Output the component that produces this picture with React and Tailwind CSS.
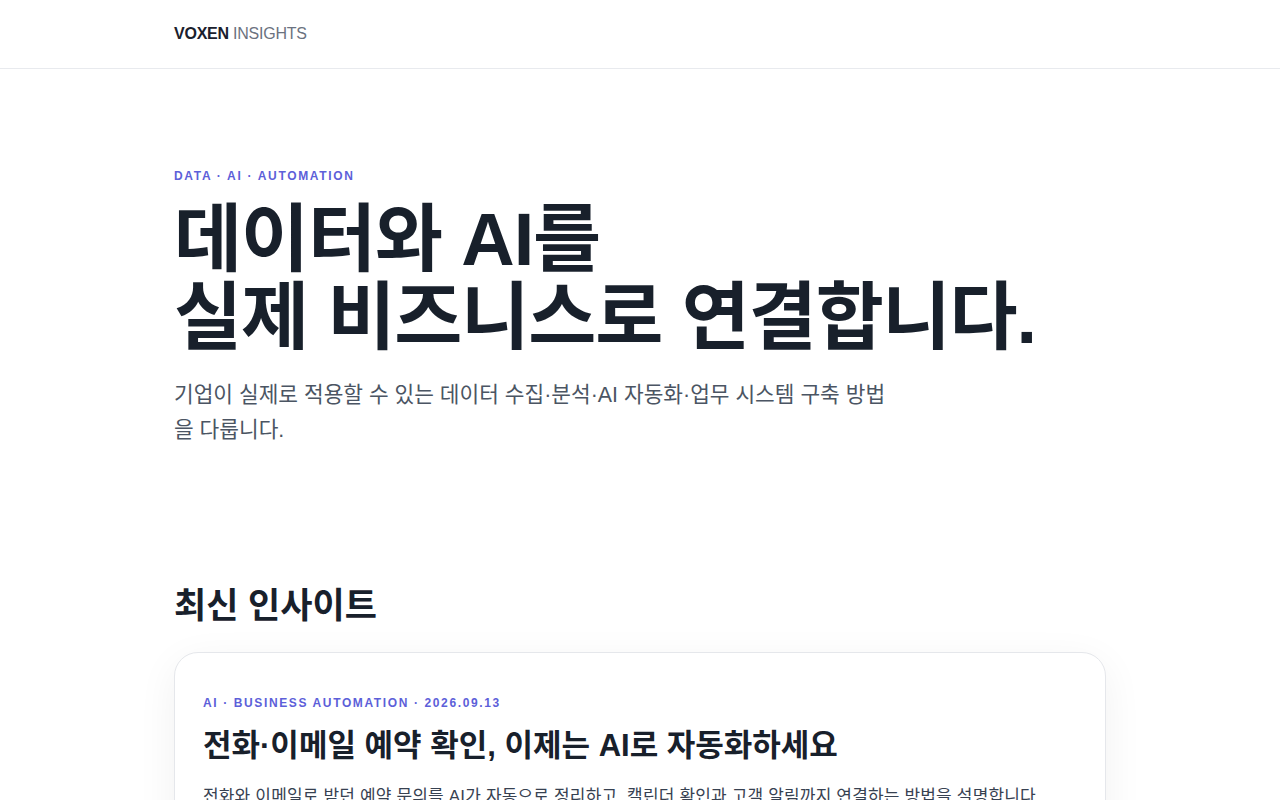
import React from 'react';

const FONT = { fontFamily: '"Liberation Sans", "Noto Sans CJK KR", sans-serif' };

const posts = [
  {
    meta: 'AI · BUSINESS AUTOMATION · 2026.09.13',
    title: '전화·이메일 예약 확인, 이제는 AI로 자동화하세요',
    excerpt:
      '전화와 이메일로 받던 예약 문의를 AI가 자동으로 정리하고, 캘린더 확인과 고객 알림까지 연결하는 방법을 설명합니다.',
  },
];

const App = () => {
  return (
    <div className="min-h-screen bg-white text-[#1a202c]" style={FONT}>
      <header className="h-[69px] border-b border-[#e8eaee]">
        <div className="mx-auto flex h-full max-w-[980px] items-center px-6">
          <a href="#" className="text-[16px] tracking-[-0.015em]">
            <span className="font-bold text-[#1a202c]">VOXEN</span>{' '}
            <span className="text-[#6b7280]">INSIGHTS</span>
          </a>
        </div>
      </header>

      <main className="mx-auto max-w-[980px] px-6">
        {/* hero */}
        <section className="pt-[99px] pb-[134px]">
          <p className="text-[12px] leading-4 font-bold tracking-[0.14em] text-[#5d5fd9]">
            DATA · AI · AUTOMATION
          </p>
          <h1 className="mt-[17px] text-[74px] leading-[78px] font-bold tracking-[-0.015em] text-[#18202b]">
            데이터와 AI를
            <br />
            실제 비즈니스로 연결합니다.
          </h1>
          <p className="mt-[21px] max-w-[730px] text-[21.4px] leading-[35px] text-[#4b5563]">
            기업이 실제로 적용할 수 있는 데이터 수집·분석·AI 자동화·업무 시스템 구축 방법을 다룹니다.
          </p>
        </section>

        {/* latest */}
        <section>
          <h2 className="mt-[2px] text-[35px] leading-[44px] font-bold tracking-[0em] text-[#18202b]">
            최신 인사이트
          </h2>
          <div className="mt-[24px] flex flex-col gap-6">
            {posts.map((post) => (
              <article
                key={post.title}
                className="rounded-[24px] border border-[#e5e7eb] bg-white px-7 pt-[42px] pb-10 shadow-[0_10px_40px_rgba(15,23,42,0.06)]"
              >
                <p className="text-[12px] leading-4 font-bold tracking-[0.135em] text-[#5d5fd9]">
                  {post.meta}
                </p>
                <h3 className="mt-[15px] text-[31px] leading-[39px] font-bold tracking-[0em] text-[#18202b]">
                  {post.title}
                </h3>
                <p className="mt-[18px] text-[17px] leading-[27px] tracking-[0.01em] text-[#374151]">
                  {post.excerpt}
                </p>
              </article>
            ))}
          </div>
        </section>
      </main>
    </div>
  );
};

export default App;
